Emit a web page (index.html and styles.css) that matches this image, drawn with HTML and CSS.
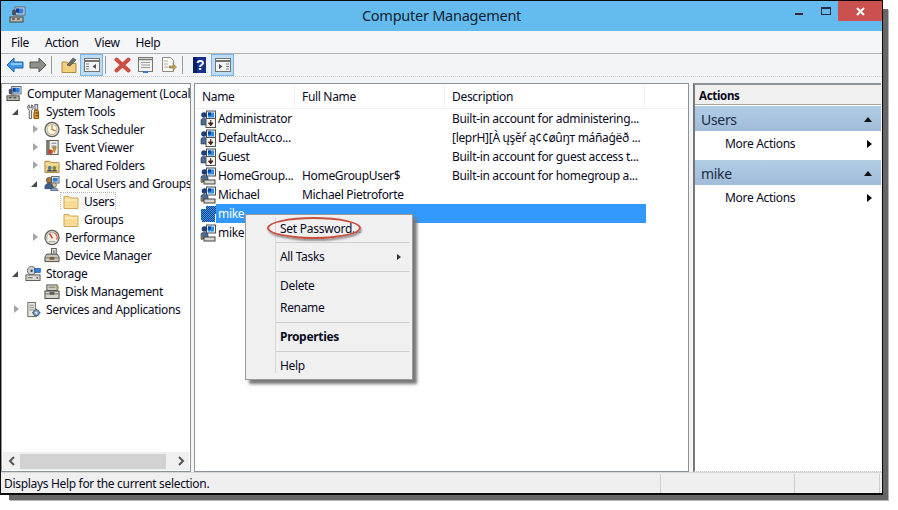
FILE: index.html
```html
<!DOCTYPE html>
<html lang="en">
<head>
<meta charset="utf-8">
<title>Computer Management</title>
<link rel="stylesheet" href="styles.css">
</head>
<body>
<svg class="defs" width="0" height="0" aria-hidden="true">
  <pattern id="p-sel" width="2" height="2" patternUnits="userSpaceOnUse"><rect width="2" height="2" fill="#3399ff"/><rect width="1" height="1" fill="#16417a"/><rect x="1" y="1" width="1" height="1" fill="#16417a"/></pattern>
  <symbol id="i-comp" viewBox="0 0 17 17">
    <rect x="6" y="1" width="10" height="8" fill="#dfe7f0" stroke="#5a6470"/>
    <rect x="7.500" y="2.500" width="7" height="5" fill="#2f7fd8"/>
    <path d="M7 2.500h3v4H7z" fill="#12408c"/>
    <rect x="1" y="11" width="13" height="5" fill="#b9b9b0" stroke="#44443e"/>
    <path d="M4 9.500h6V11H4z" fill="#7a7a72"/>
    <path d="M3 13h3M8 13h3" stroke="#222" stroke-width="1.200"/>
    <path d="M3 5c1-2 3-2 4 0v4H3z" fill="#4d4d68"/>
  </symbol>
  <symbol id="i-tools" viewBox="0 0 17 17">
    <path d="M3 2.500v3l1.500 1.500V16H7V7l1.500-1.500v-3L7 1.500V4.500H4.500V1.500z" fill="#eee" stroke="#5c5c5c"/>
    <rect x="10.500" y="1" width="3" height="6" fill="#d8d8d8" stroke="#666"/>
    <path d="M10.500 7h3l1 3v6h-5v-6z" fill="#e89a20" stroke="#7a4a10"/>
    <path d="M11 10h3M11 13h3" stroke="#5a3208"/>
  </symbol>
  <symbol id="i-clock" viewBox="0 0 17 17">
    <circle cx="8.500" cy="8.500" r="7.500" fill="#e8e0c8" stroke="#5e5e58" stroke-width="1.300"/>
    <circle cx="8.500" cy="8.500" r="5.300" fill="#fbf6e4" stroke="#b9b29b"/>
    <path d="M8.500 4v4.500L12.500 10" fill="none" stroke="#b3762a" stroke-width="1.200"/>
  </symbol>
  <symbol id="i-event" viewBox="0 0 17 17">
    <rect x="3" y="1" width="12" height="15" fill="#f3f0e6" stroke="#55524a"/>
    <path d="M3 1h3v15H3z" fill="#7d7868"/>
    <path d="M8 4h5M8 7h5" stroke="#5a7fb0"/>
    <path d="M9 8l4 0-2 6z" fill="#e0a020" stroke="#8a5510" stroke-width=".6"/>
    <circle cx="7" cy="13" r="2.500" fill="#c74030"/>
  </symbol>
  <symbol id="i-shared" viewBox="0 0 17 17">
    <path d="M1 4h5l1 1.500h9V16H1z" fill="#f2cf7e" stroke="#a8823a"/>
    <path d="M1 7h15" stroke="#fbeab8"/>
    <circle cx="6" cy="11" r="2" fill="#4a78a8"/>
    <circle cx="11" cy="11" r="2" fill="#6f8d3d"/>
    <path d="M3 15c0-3 6-3 6 0M8.500 15c0-3 5.500-3 5.500 0" fill="#3e4a58"/>
  </symbol>
  <symbol id="i-users" viewBox="0 0 17 17">
    <rect x="8" y="1" width="8" height="7" fill="#dfe7f0" stroke="#5a6470"/>
    <rect x="9.500" y="2.500" width="5" height="4" fill="#2f7fd8"/>
    <circle cx="5.500" cy="5" r="3" fill="#a8743f" stroke="#4a3420" stroke-width=".7"/>
    <path d="M1 12c0-5 9-5 9 0v2H1z" fill="#3d5f8c" stroke="#25344a" stroke-width=".7"/>
    <circle cx="11" cy="10" r="2.300" fill="#d8c0a0" stroke="#5d5040" stroke-width=".7"/>
    <path d="M7 16c0-4 8-4 8 0z" fill="#83a0be" stroke="#3f5268" stroke-width=".7"/>
  </symbol>
  <symbol id="i-folder" viewBox="0 0 16 16">
    <path d="M1 3h5l1 1.500h8V15H1z" fill="#f8dc97" stroke="#cfa95a"/>
    <path d="M2 6.500h12" stroke="#fdf3cf"/>
    <path d="M2 9h12M2 12h12" stroke="#f3cf7e" stroke-dasharray="1 1"/>
  </symbol>
  <symbol id="i-perf" viewBox="0 0 17 17">
    <circle cx="8.500" cy="8.500" r="7.500" fill="#f4efe6" stroke="#5e5e58" stroke-width="1.300"/>
    <path d="M3.500 11A5.500 5.500 0 0 1 11 3.700" fill="none" stroke="#aaa" stroke-width="1.200"/>
    <path d="M11 3.700A5.500 5.500 0 0 1 13.500 11" fill="none" stroke="#d84a30" stroke-width="1.200"/>
    <path d="M6 4.500L9 9.500" stroke="#c73a25" stroke-width="1.500"/>
    <path d="M5 13h7" stroke="#8e8e86"/>
  </symbol>
  <symbol id="i-device" viewBox="0 0 17 17">
    <rect x="8" y="1" width="5" height="7" fill="#e5e5df" stroke="#55554e"/>
    <path d="M10.500 3v3" stroke="#444"/>
    <path d="M3 7h11l2 3v5H1v-5z" fill="#c9c7bb" stroke="#45453f"/>
    <path d="M1 11h15" stroke="#77776f"/>
    <rect x="6" y="10" width="5" height="3" fill="#7a5a34"/>
  </symbol>
  <symbol id="i-storage" viewBox="0 0 17 17">
    <circle cx="7" cy="5.500" r="4.500" fill="#cfd3d6" stroke="#5d6166"/>
    <circle cx="7" cy="5.500" r="1.300" fill="#444"/>
    <rect x="10" y="3" width="6.500" height="4.500" fill="#2f7fd8" stroke="#1f4f90" stroke-width=".6"/>
    <rect x="1" y="10" width="15" height="6" fill="#d9d9d2" stroke="#55554e"/>
    <path d="M3 13h5" stroke="#777" stroke-width="1.300"/>
    <circle cx="13" cy="13" r="1" fill="#6a6a64"/>
  </symbol>
  <symbol id="i-disk" viewBox="0 0 17 17">
    <rect x="3" y="1.500" width="11" height="6" fill="#c9cbc4" stroke="#55554e"/>
    <path d="M5 4h7" stroke="#777"/>
    <rect x="1" y="8" width="15" height="8" fill="#d3d3cc" stroke="#45453f"/>
    <path d="M1 11h15" stroke="#6a6a62"/>
    <rect x="6" y="9" width="5" height="3" fill="#5f5f58"/>
    <path d="M14 3l2 0v3h-2z" fill="#c8a23a"/>
  </symbol>
  <symbol id="i-services" viewBox="0 0 17 17">
    <rect x="3" y="1" width="8" height="15" fill="#e8e8e3" stroke="#666660"/>
    <path d="M4.500 4h5M4.500 6.500h5M4.500 9h5" stroke="#8a8a82"/>
    <circle cx="12" cy="12" r="3.300" fill="#7ea2c6" stroke="#3f5c7c"/>
    <circle cx="12" cy="12" r="1.200" fill="#edf2f6"/>
    <path d="M12 7.500v1.500M12 15v1.500M7.500 12H9M15 12h1.500" stroke="#3f5c7c"/>
  </symbol>
  <symbol id="i-user" viewBox="0 0 16 18">
    <rect x="6.500" y="1" width="9" height="8" fill="#eef2f6" stroke="#47505a"/>
    <rect x="8" y="2.500" width="6" height="5" fill="#2f8de0"/>
    <path d="M8 2.500h3v3H8z" fill="#0e3f8a"/>
    <circle cx="4.500" cy="5" r="2.800" fill="#1d3f7a"/>
    <path d="M1 15v-5c0-2 6-2 7 0v5z" fill="#4a6d95" stroke="#203246" stroke-width=".6"/>
    <path d="M1 11h1.500v5H1z" fill="#9a7040"/>
    <rect x="4" y="13" width="11" height="4" fill="#d8d8d2" stroke="#444440"/>
  </symbol>
  <symbol id="i-userd" viewBox="0 0 16 18">
    <rect x="6.500" y="1" width="9" height="8" fill="#eef2f6" stroke="#47505a"/>
    <rect x="8" y="2.500" width="6" height="5" fill="#2f8de0"/>
    <path d="M8 2.500h3v3H8z" fill="#0e3f8a"/>
    <circle cx="4" cy="5" r="2.800" fill="#1d3f7a"/>
    <path d="M1 15v-5c0-2 5-2 6 0v5z" fill="#4a6d95" stroke="#203246" stroke-width=".6"/>
    <rect x="6" y="8.500" width="9.500" height="9" fill="#f4f4f0" stroke="#555550"/>
    <path d="M10.750 10v4M8.500 13h4.500l-2.250 2.800z" fill="#4a1c14" stroke="#4a1c14"/>
  </symbol>
  <symbol id="i-usersel" viewBox="0 0 16 18">
    <path d="M6 1h10v8h-1v8H2v-2H1V4h5z" fill="url(#p-sel)"/>
  </symbol>
</svg>

<div class="window">
  <header class="titlebar">
    <svg class="app-icon"><use href="#i-comp"/></svg>
    <span class="title">Computer Management</span>
    <div class="winctl">
      <span class="minimize"></span>
      <span class="maximize"></span>
      <span class="close">
        <svg width="11" height="11" viewBox="0 0 11 11"><path d="M2 2l7 7M9 2l-7 7" stroke="#fff" stroke-width="2"/></svg>
      </span>
    </div>
  </header>

  <nav class="menubar">
    <span>File</span><span>Action</span><span>View</span><span>Help</span>
  </nav>

  <div class="toolbar">
    <span class="tool">
      <svg width="18" height="16" viewBox="0 0 18 16"><path d="M1 8l7-7V5h9v6H8v4z" fill="#3f9ae6" stroke="#1c5fa8"/><path d="M5 7h11" stroke="#a8d8fb" stroke-width="1.500"/></svg>
    </span>
    <span class="tool">
      <svg width="18" height="16" viewBox="0 0 18 16"><path d="M17 8L10 1V5H1v6h9v4z" fill="#8f8f8b" stroke="#55554f"/></svg>
    </span>
    <i class="tsep"></i>
    <span class="tool">
      <svg width="16" height="16" viewBox="0 0 16 16"><path d="M1 5h5l1 1.500h8V15.500H1z" fill="#f3cf7e" stroke="#b08a3f"/><path d="M6 8l6-7 3 2-6 6z" fill="#6b6b68" stroke="#3f3f3c" stroke-width=".6"/></svg>
    </span>
    <span class="tool on">
      <svg width="16" height="14" viewBox="0 0 16 14"><rect x=".5" y=".5" width="15" height="13" fill="#f3f3f1" stroke="#74746f"/><path d="M1 3h14" stroke="#74746f" stroke-width="2"/><path d="M2 5.500h3v1H2zM2 8h3v1H2zM2 10.500h3v1H2z" fill="#6f7f92"/><path d="M12 6v5L8.500 8.500z" fill="#44505e"/></svg>
    </span>
    <i class="tsep"></i>
    <span class="tool">
      <svg width="17" height="16" viewBox="0 0 17 16"><path d="M2.500 2.500l12 11M14.500 2.500l-12 11" stroke="#cf5040" stroke-width="4" stroke-linecap="round"/></svg>
    </span>
    <span class="tool">
      <svg width="15" height="16" viewBox="0 0 15 16"><rect x=".5" y=".5" width="14" height="14" fill="#f4f4f2" stroke="#777772"/><path d="M.5 2.500h14" stroke="#777772" stroke-width="1.500"/><path d="M3 5.500h9M3 8h9M3 10.500h9" stroke="#9a9a94"/><path d="M5 15h5" stroke="#2f7fd8" stroke-width="2"/></svg>
    </span>
    <span class="tool">
      <svg width="16" height="16" viewBox="0 0 16 16"><path d="M1.500.5h8l3 3v11h-11z" fill="#fbfaf2" stroke="#8a8a82"/><path d="M3.500 4h4M3.500 7h4M3.500 10h4" stroke="#555" stroke-dasharray="1 1"/><path d="M8 9h4V6.500l3.500 3.500L12 13.500V11H8z" fill="#c49a4a" stroke="#6f6f68" stroke-width=".5"/></svg>
    </span>
    <i class="tsep"></i>
    <span class="tool">
      <svg width="14" height="16" viewBox="0 0 14 16"><rect width="13" height="16" fill="#14318e"/><path d="M0 0h4v16H0z" fill="#0c1f66"/><text x="7" y="13" class="qmark">?</text></svg>
    </span>
    <span class="tool on">
      <svg width="16" height="14" viewBox="0 0 16 14"><rect x=".5" y=".5" width="15" height="13" fill="#f3f3f1" stroke="#74746f"/><path d="M1 3h14" stroke="#74746f" stroke-width="2"/><path d="M11 5.500h3v1h-3zM11 8h3v1h-3zM11 10.500h3v1h-3z" fill="#6f7f92"/><path d="M4 6v5l3.500-2.500z" fill="#44505e"/></svg>
    </span>
  </div>

  <main class="panes">
    <aside class="tree">
      <div class="tree-rows">
        <div class="row l0"><svg class="ticon"><use href="#i-comp"/></svg><span>Computer Management (Local</span></div>
        <div class="row l1"><i class="tw open"></i><svg class="ticon"><use href="#i-tools"/></svg><span>System Tools</span></div>
        <div class="row l2"><i class="tw"></i><svg class="ticon"><use href="#i-clock"/></svg><span>Task Scheduler</span></div>
        <div class="row l2"><i class="tw"></i><svg class="ticon"><use href="#i-event"/></svg><span>Event Viewer</span></div>
        <div class="row l2"><i class="tw"></i><svg class="ticon"><use href="#i-shared"/></svg><span>Shared Folders</span></div>
        <div class="row l2"><i class="tw open"></i><svg class="ticon"><use href="#i-users"/></svg><span>Local Users and Groups</span></div>
        <div class="row l3"><div class="current"><svg class="ticon"><use href="#i-folder"/></svg><span>Users</span></div></div>
        <div class="row l3"><svg class="ticon"><use href="#i-folder"/></svg><span>Groups</span></div>
        <div class="row l2"><i class="tw"></i><svg class="ticon"><use href="#i-perf"/></svg><span>Performance</span></div>
        <div class="row l2"><i class="tw none"></i><svg class="ticon"><use href="#i-device"/></svg><span>Device Manager</span></div>
        <div class="row l1"><i class="tw open"></i><svg class="ticon"><use href="#i-storage"/></svg><span>Storage</span></div>
        <div class="row l2"><i class="tw none"></i><svg class="ticon"><use href="#i-disk"/></svg><span>Disk Management</span></div>
        <div class="row l1"><i class="tw"></i><svg class="ticon"><use href="#i-services"/></svg><span>Services and Applications</span></div>
      </div>
      <div class="hscroll">
        <svg width="8" height="10" viewBox="0 0 8 10"><path d="M6 1L2 5l4 4" fill="none" stroke="#555" stroke-width="2"/></svg>
        <span class="thumb"></span>
        <svg width="8" height="10" viewBox="0 0 8 10"><path d="M2 1l4 4-4 4" fill="none" stroke="#555" stroke-width="2"/></svg>
      </div>
    </aside>

    <section class="list">
      <div class="lhead"><span>Name</span><span>Full Name</span><span>Description</span><span></span></div>
      <div class="lrow"><svg class="licon"><use href="#i-userd"/></svg><div class="cells"><span>Administrator</span><span></span><span>Built-in account for administering...</span></div></div>
      <div class="lrow"><svg class="licon"><use href="#i-userd"/></svg><div class="cells"><span>DefaultAcco...</span><span></span><span>[leprH][À ųşĕŕ ą¢¢øûŋт máñaģëð ...</span></div></div>
      <div class="lrow"><svg class="licon"><use href="#i-userd"/></svg><div class="cells"><span>Guest</span><span></span><span>Built-in account for guest access t...</span></div></div>
      <div class="lrow"><svg class="licon"><use href="#i-user"/></svg><div class="cells"><span>HomeGroup...</span><span>HomeGroupUser$</span><span>Built-in account for homegroup a...</span></div></div>
      <div class="lrow"><svg class="licon"><use href="#i-user"/></svg><div class="cells"><span>Michael</span><span>Michael Pietroforte</span><span></span></div></div>
      <div class="lrow sel"><svg class="licon"><use href="#i-usersel"/></svg><div class="cells"><span>mike</span><span></span><span></span></div></div>
      <div class="lrow"><svg class="licon"><use href="#i-user"/></svg><div class="cells"><span>mike</span><span></span><span></span></div></div>

      <div class="ctx">
        <div class="ctx-item wide-text">Set Password...</div>
        <hr class="first">
        <div class="ctx-item">All Tasks<i class="sub"></i></div>
        <hr>
        <div class="ctx-item">Delete</div>
        <div class="ctx-item">Rename</div>
        <hr>
        <div class="ctx-item bold">Properties</div>
        <hr>
        <div class="ctx-item">Help</div>
        <span class="ring"></span>
      </div>
    </section>

    <aside class="actions">
      <div class="a-title">Actions</div>
      <div class="a-band"><span>Users</span><i class="up"></i></div>
      <div class="a-item"><span>More Actions</span><i class="more"></i></div>
      <div class="a-band"><span>mike</span><i class="up"></i></div>
      <div class="a-item"><span>More Actions</span><i class="more"></i></div>
    </aside>
  </main>

  <footer class="status">
    <span class="st-main">Displays Help for the current selection.</span>
    <span class="st-a"></span>
    <span class="st-b"></span>
  </footer>
</div>
</body>
</html>
```

FILE: styles.css
```css
html, body { margin: 0; padding: 0; background: #fff; }
body { width: 898px; height: 510px; overflow: hidden; font-family: "Noto Sans", "Open Sans", sans-serif; font-size: 12px; letter-spacing: -0.32px; color: #0a0a1e; }
.defs { position: absolute; }
.qmark { font: bold 14px "Liberation Sans", sans-serif; fill: #fff; text-anchor: middle; }

.window {
  box-sizing: border-box; width: 883px; height: 495px;
  border: 1px solid #0a0a0a; border-width: 1px 1px 2px 1px;
  background: #f3f4f5; display: flex; flex-direction: column;
  box-shadow: 7px 7px 0 -2px #666, 8px 8px 0 -2px #b5b5b5;
}

.titlebar { height: 30px; flex: none; background: #64bcee; display: flex; position: relative; align-items: center; }
.app-icon { width: 17px; height: 17px; margin: -3px 0 0 8px; }
.title { position: absolute; left: 0; right: 0; top: 4px; text-align: center; font-size: 14.500px; letter-spacing: -0.25px; line-height: 20px; color: #123; }
.winctl { margin-left: auto; display: flex; align-self: flex-start; align-items: flex-start; }
.minimize { width: 8px; height: 2px; background: #3a2430; margin: 12px 0 0 0; }
.maximize { box-sizing: border-box; width: 10px; height: 8px; border: 1px solid #2a2a44; border-top-width: 2px; margin: 6px 0 0 18px; }
.close { width: 44px; height: 20px; margin-left: 7px; background: #cb5050; display: flex; align-items: center; justify-content: center; }

.menubar { height: 22px; flex: none; display: flex; padding-left: 10px; gap: 16px; align-items: center; border-bottom: 1px solid #b0b0b0; background: #f4f5f6; }

.toolbar { height: 22px; flex: none; display: flex; align-items: center; padding-left: 2px; border-bottom: 1px dotted #d0d0d0; }
.tool { width: 23px; height: 22px; flex: none; display: flex; align-items: center; justify-content: center; box-sizing: border-box; }
.tool.on { background: #bcdcf6; border: 1px solid #7db4e6; }
.tsep { width: 1px; height: 18px; background: #9a9a9a; margin: 0 5px 0 2px; }

.panes { flex: none; margin-top: 6px; height: 389px; display: flex; }

.tree { box-sizing: border-box; width: 190px; border: 1px solid #8d9299; background: #fff; display: flex; flex-direction: column; }
.tree-rows { flex: 1; }
.row { height: 18px; display: flex; align-items: center; white-space: nowrap; overflow: hidden; }
.l0 { padding-left: 4px; }
.l1 { padding-left: 9px; }
.l2 { padding-left: 28px; }
.l3 { padding-left: 61px; }
.tw { width: 14px; flex: none; height: 9px; position: relative; }
.tw::before { content: ""; position: absolute; left: 3px; top: 0; width: 0; height: 0; border-style: solid; border-width: 4.500px 0 4.500px 5px; border-color: transparent transparent transparent #a6a6a6; }
.tw.open::before { left: 1px; top: 2px; border-width: 0 0 6px 6px; border-color: transparent transparent #4a4a4a transparent; }
.tw.none::before { display: none; }
.ticon { width: 16px; height: 17px; flex: none; margin-right: 5px; }
.current { display: flex; align-items: center; height: 17px; padding: 0 2px; margin-left: -2px; width: 50px; outline: 1px dotted #b5b5b5; background: #f8f8f8; }

.hscroll { height: 18px; flex: none; margin: 0 1px 1px; background: #f0f0f0; display: flex; align-items: center; padding: 0 0 0 5px; }
.thumb { width: 146px; height: 15px; margin: 0 11px 0 4px; background: #d2d2d2; }

.list { box-sizing: border-box; width: 495px; margin-left: 3px; border: 1px solid #8d9299; background: #fff; position: relative; }
.lhead { display: grid; grid-template-columns: 100px 150px 200px 1fr; height: 24px; margin-top: 1px; border-bottom: 1px solid #eef0f2; box-sizing: border-box; }
.lhead span { padding-left: 7px; line-height: 24px; border-right: 1px solid #eef0f2; }
.lhead span:last-child { border-right: 0; }
.lrow { display: flex; height: 19px; align-items: center; padding-left: 5px; }
.licon { width: 16px; height: 18px; flex: none; }
.cells { display: grid; grid-template-columns: 86px 150px 194px; width: 430px; height: 19px; line-height: 19px; }
.cells span { white-space: nowrap; }
.cells span:first-child { padding-left: 2px; }
.sel .cells { background: #3399ff; color: #fff; }

.ctx { position: absolute; left: 50px; top: 130px; width: 168px; height: 166px; box-sizing: border-box; border: 1px solid #9a9a9a; background: #f0f0f0; box-shadow: 4px 4px 3px #777; padding-top: 3px; z-index: 2; }
.ctx::before { content: ""; position: absolute; left: 29px; top: 2px; bottom: 6px; width: 1px; background: #d8d8d8; }
.ctx-item { height: 22px; line-height: 22px; padding-left: 34px; position: relative; }
.ctx-item.wide-text { letter-spacing: -0.25px; line-height: 21px; }
.ctx-item.bold { font-weight: 700; }
.ctx hr { height: 1px; border: 0; margin: 3px 2px 3px 29px; background: #cfcfcf; }
.ctx hr.first { margin-top: 2px; }
.sub { position: absolute; left: 151px; top: 8px; border-style: solid; border-width: 3.500px 0 3.500px 4px; border-color: transparent transparent transparent #333; }
.ring { position: absolute; left: 21px; top: 2px; width: 90px; height: 18px; border: 2px solid #c8503f; border-radius: 50%; box-shadow: 1px 2px 2px #999; pointer-events: none; }

.actions { box-sizing: border-box; width: 188px; margin-left: 4px; border-left: 2px solid #777; border-top: 2px solid #8d9299; border-bottom: 1px dotted #bbb; background: #fff; }
.a-title { height: 20px; line-height: 22px; padding-left: 4px; font-weight: 700; font-size: 11.500px; background: #f0f0f0; border-bottom: 1px solid #a8a8a8; margin-bottom: 1px; box-sizing: border-box; }
.a-band { height: 25px; box-sizing: border-box; display: flex; align-items: center; justify-content: space-between; padding: 1px 9px 0 6px; font-size: 14px; background: linear-gradient(#b2cde6, #9fbbd8); color: #1c2a44; }
.up { border-style: solid; border-width: 0 4.500px 5px 4.500px; border-color: transparent transparent #111 transparent; }
.a-item { height: 29px; box-sizing: border-box; display: flex; align-items: center; justify-content: space-between; padding: 0 9px 4px 30px; }
.more { border-style: solid; border-width: 4.500px 0 4.500px 5px; border-color: transparent transparent transparent #000; }

.status { flex: 1; display: flex; align-items: center; border-top: 1px solid #d6d6d6; background: #efefef; }
.st-main { width: 660px; padding: 1px 0 0 3px; box-sizing: border-box; border-right: 1px solid #cfcfcf; height: 19px; line-height: 18px; }
.st-a { width: 133px; height: 19px; border-right: 1px solid #cfcfcf; }
.st-b { width: 84px; height: 19px; border-right: 1px solid #cfcfcf; }
```
